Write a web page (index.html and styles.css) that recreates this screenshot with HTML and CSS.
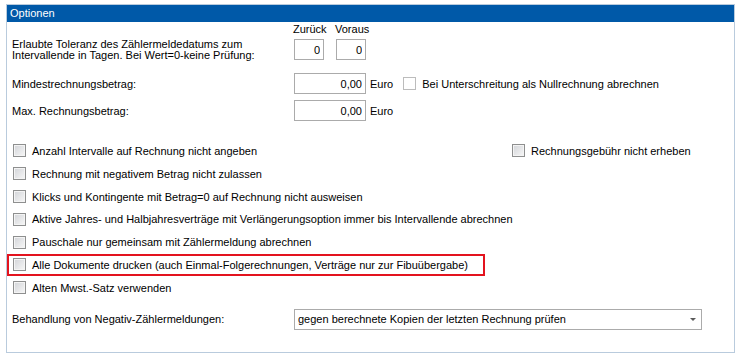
FILE: index.html
```html
<!DOCTYPE html>
<html lang="de">
<head>
    <meta charset="UTF-8">
    <title>Optionen</title>
    <link rel="stylesheet" href="styles.css">
</head>
<body>
    <div class="panel">
        <div class="panel-title">Optionen</div>

        <div class="tol-head">
            <span>Zurück</span>
            <span>Voraus</span>
        </div>
        <div class="form-row tol-row">
            <div class="form-label tol-label">Erlaubte Toleranz des Zählermeldedatums zum<br>Intervallende in Tagen. Bei Wert=0-keine Prüfung:</div>
            <input class="field field-small" type="text" value="0" readonly>
            <input class="field field-small" type="text" value="0" readonly>
        </div>

        <div class="form-row amount-row first-amount">
            <div class="form-label">Mindestrechnungsbetrag:</div>
            <input class="field field-amount" type="text" value="0,00" readonly>
            <span class="unit">Euro</span>
            <label class="check-item unit-check">
                <span class="check check-disabled"></span>
                Bei Unterschreitung als Nullrechnung abrechnen
            </label>
        </div>
        <div class="form-row amount-row">
            <div class="form-label">Max. Rechnungsbetrag:</div>
            <input class="field field-amount" type="text" value="0,00" readonly>
            <span class="unit">Euro</span>
        </div>

        <div class="check-list">
            <div class="check-row check-row-split">
                <label class="check-item"><span class="check"></span>Anzahl Intervalle auf Rechnung nicht angeben</label>
                <label class="check-item"><span class="check"></span>Rechnungsgebühr nicht erheben</label>
            </div>
            <div class="check-row">
                <label class="check-item"><span class="check"></span>Rechnung mit negativem Betrag nicht zulassen</label>
            </div>
            <div class="check-row">
                <label class="check-item"><span class="check"></span>Klicks und Kontingente mit Betrag=0 auf Rechnung nicht ausweisen</label>
            </div>
            <div class="check-row">
                <label class="check-item"><span class="check"></span>Aktive Jahres- und Halbjahresverträge mit Verlängerungsoption immer bis Intervallende abrechnen</label>
            </div>
            <div class="check-row">
                <label class="check-item"><span class="check"></span>Pauschale nur gemeinsam mit Zählermeldung abrechnen</label>
            </div>
            <div class="check-row check-row-marked">
                <label class="check-item"><span class="check"></span>Alle Dokumente drucken (auch Einmal-Folgerechnungen, Verträge nur zur Fibuübergabe)</label>
            </div>
            <div class="check-row">
                <label class="check-item"><span class="check"></span>Alten Mwst.-Satz verwenden</label>
            </div>
        </div>

        <div class="form-row select-row">
            <div class="form-label">Behandlung von Negativ-Zählermeldungen:</div>
            <div class="select">
                <span>gegen berechnete Kopien der letzten Rechnung prüfen</span>
                <span class="select-arrow"></span>
            </div>
        </div>
    </div>
</body>
</html>
```

FILE: styles.css
```css
body {
    margin: 0;
    background: #fff;
    font-family: "Liberation Sans", Arial, sans-serif;
    font-size: 11px;
    color: #000;
}
.panel {
    box-sizing: border-box;
    width: 729px;
    height: 349px;
    margin: 4px 0 0 6px;
    border: 1px solid #b9cbdd;
}
.panel-title {
    height: 17px;
    line-height: 17px;
    padding-left: 3px;
    background: #0059a8;
    color: #fff;
}
/* Toleranz-Kopfzeile */
.tol-head {
    display: grid;
    grid-template-columns: 30px 30px;
    column-gap: 12px;
    height: 13px;
    line-height: 13px;
    margin-top: 1px;
    padding-left: 286px;
    white-space: nowrap;
}
.form-row {
    display: flex;
    align-items: center;
    padding-left: 5px;
    height: 21px;
}
.form-label {
    width: 282px;
    flex-shrink: 0;
    white-space: nowrap;
}
.tol-row {
    margin-top: 3px;
    gap: 12px;
}
.tol-row .form-label {
    margin-right: -12px;
}
.tol-label {
    line-height: 11px;
}
.field {
    box-sizing: border-box;
    height: 21px;
    margin: 0;
    padding: 0 3px;
    border: 1px solid #ababab;
    background: #fff;
    font-family: inherit;
    font-size: 11px;
    color: #000;
    text-align: right;
    outline: none;
}
.field-small {
    width: 30px;
}
.field-amount {
    width: 72px;
}
.amount-row {
    margin-top: 6px;
}
.first-amount {
    margin-top: 13px;
}
.unit {
    margin-left: 4px;
}
.unit-check {
    margin-left: 10px;
    gap: 5px;
}
/* Checkboxen */
.check-item {
    display: flex;
    align-items: center;
    gap: 6px;
    white-space: nowrap;
}
.check {
    box-sizing: border-box;
    width: 13px;
    height: 13px;
    border: 1px solid #8e8f8f;
    background: linear-gradient(135deg, #d2d4d8, #f7f7f7);
    box-shadow: inset 0 0 0 1px #f4f4f4;
    flex-shrink: 0;
}
.check-disabled {
    border-color: #bcbcbc;
    background: #fff;
    box-shadow: none;
}
.check-list {
    margin-top: 18.6px;
}
.check-row {
    box-sizing: border-box;
    display: flex;
    align-items: center;
    height: 22.8px;
    padding-left: 6px;
}
.check-row-split {
    display: grid;
    grid-template-columns: 499px auto;
}
.check-row-marked {
    width: 478px;
    box-shadow: inset 0 0 0 2px #e3131e;
}
/* Auswahlfeld */
.select-row {
    margin-top: 9.8px;
}
.select {
    box-sizing: border-box;
    display: flex;
    align-items: center;
    justify-content: space-between;
    width: 408px;
    height: 21px;
    padding: 0 5px 0 3px;
    border: 1px solid #ababab;
    background: #fff;
}
.select-arrow {
    width: 0;
    height: 0;
    border-left: 3px solid transparent;
    border-right: 3px solid transparent;
    border-top: 3px solid #5a5a5a;
}
```
